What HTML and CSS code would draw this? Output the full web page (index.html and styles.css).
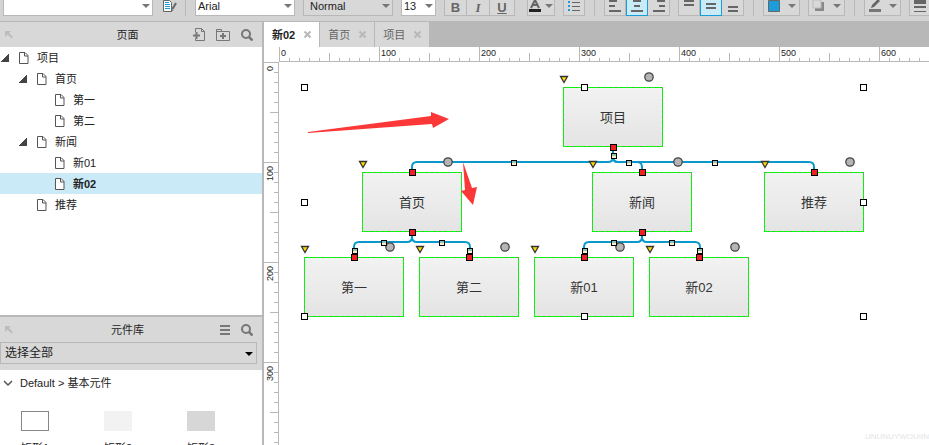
FILE: index.html
```html
<!DOCTYPE html>
<html lang="zh-CN">
<head>
  <meta charset="UTF-8" />
  <meta name="viewport" content="width=device-width, initial-scale=1.0" />
  <title>新02</title>
  <link rel="stylesheet" href="styles.css">
</head>
<body>
  <svg class="defs" aria-hidden="true">
    <symbol id="page" viewBox="0 0 10 12"><path d="M.5 .5h5.500l3 3v8h-8.500z" fill="#fff" stroke="#555"/><path d="M5.500 .5v3.500h3.500" fill="none" stroke="#555"/></symbol>
    <symbol id="search" viewBox="0 0 12 12"><circle cx="5" cy="5" r="4" fill="none" stroke="#777" stroke-width="2"/><path d="M8 8l3.500 3.500" stroke="#777" stroke-width="2.500"/></symbol>
    <symbol id="collapse" viewBox="0 0 8 8"><path d="M0 0h6l-2 2 4 4-1.500 1.500-4-4-2.500 2.500z" fill="#bcbcbc"/></symbol>
    <symbol id="down" viewBox="0 0 8 4"><path d="M0 0h8l-4 4z" fill="#777"/></symbol>
  </svg>

  <div class="toolbar">
    <span class="drop style-drop"><select aria-label="Style"><option></option></select></span>
    <button class="plain" aria-label="Edit style">
      <svg width="14" height="12" viewBox="0 0 14 12"><path d="M.5 .5h6l2 2v9h-8z" fill="#fff" stroke="#666"/><path d="M2 2.500h4M2 4.500h5M2 6.500h5M2 8.500h5" stroke="#1b9dd9"/><path d="M13 3l-3.500 6" stroke="#666" stroke-width="2"/><path d="M8 12l.5-3 2 1.200z" fill="#666"/></svg>
    </button>
    <span class="sep"></span>
    <span class="drop font-drop"><select aria-label="Font"><option>Arial</option></select></span>
    <span class="drop weight-drop"><select aria-label="Weight"><option>Normal</option></select></span>
    <span class="drop size-drop"><select aria-label="Size"><option>13</option></select></span>
    <div class="group letters">
      <button class="bold">B</button>
      <button class="italic">I</button>
      <button class="underline">U</button>
    </div>
    <button class="wide text-color" aria-label="Text color">
      <svg width="12" height="12" viewBox="0 0 12 12"><path d="M2 8l4-8 4 8M3.500 5h5" fill="none" stroke="#666" stroke-width="2"/><path d="M0 9h12v3h-12z" fill="#222"/></svg>
      <svg width="8" height="4"><use href="#down"/></svg>
    </button>
    <button class="box" aria-label="Bullets">
      <svg width="12" height="10" viewBox="0 0 12 10"><path d="M0 1h2M0 5h2M0 9h2" stroke="#1b9dd9" stroke-width="2"/><path d="M4 1.500h8M4 5.500h8M4 9.500h8" stroke="#666"/></svg>
    </button>
    <span class="sep"></span>
    <div class="group">
      <button aria-label="Align left"><svg width="12" height="12" viewBox="0 0 12 12"><path d="M0 1h8M0 6h6M0 11h12" stroke="#666" stroke-width="2"/></svg></button>
      <button class="on" aria-label="Align center"><svg width="12" height="12" viewBox="0 0 12 12"><path d="M2 1h8M3 6h6M0 11h12" stroke="#666" stroke-width="2"/></svg></button>
      <button aria-label="Align right"><svg width="12" height="12" viewBox="0 0 12 12"><path d="M4 1h8M6 6h6M0 11h12" stroke="#666" stroke-width="2"/></svg></button>
    </div>
    <div class="group">
      <button aria-label="Align top"><svg width="10" height="12" viewBox="0 0 10 12"><path d="M0 1h10M0 5h10" stroke="#666" stroke-width="2"/></svg></button>
      <button class="on" aria-label="Align middle"><svg width="10" height="12" viewBox="0 0 10 12"><path d="M0 4h10M0 8h10" stroke="#666" stroke-width="2"/></svg></button>
      <button aria-label="Align bottom"><svg width="10" height="12" viewBox="0 0 10 12"><path d="M0 7h10M0 11h10" stroke="#666" stroke-width="2"/></svg></button>
    </div>
    <span class="sep"></span>
    <button class="wide" aria-label="Fill color">
      <svg width="12" height="12" viewBox="0 0 12 12"><path d="M.5 .5h11v11h-11z" fill="#1b9dd9" stroke="#666"/></svg>
      <svg width="8" height="4"><use href="#down"/></svg>
    </button>
    <button class="wide" aria-label="Shadow">
      <svg width="12" height="12" viewBox="0 0 12 12"><path d="M2 2h9v9h-9z" fill="#888"/><path d="M0 0h8v8h-8z" fill="#d8d8d8" stroke="#bbb"/></svg>
      <svg width="8" height="4"><use href="#down"/></svg>
    </button>
    <span class="sep"></span>
    <button class="wide" aria-label="Line color">
      <svg width="12" height="12" viewBox="0 0 12 12"><path d="M0 9h12v3h-12z" fill="#777"/><path d="M2 8l1-3 6-6 2 2-6 6z" fill="#666"/></svg>
      <svg width="8" height="4"><use href="#down"/></svg>
    </button>
    <button class="wide" aria-label="Line width">
      <svg width="12" height="12" viewBox="0 0 12 12"><path d="M0 2h12" stroke="#666" stroke-width="4"/><path d="M0 7h12" stroke="#666" stroke-width="2"/><path d="M0 11.500h12" stroke="#666"/></svg>
      <svg width="8" height="4"><use href="#down"/></svg>
    </button>
  </div>

  <div class="workspace">
    <aside class="sidebar">
      <section class="pages">
        <header class="panel-head">
          <svg width="8" height="8"><use href="#collapse"/></svg>
          <h2>页面</h2>
          <div class="tools">
            <button class="plain" aria-label="Add page"><svg width="12" height="14" viewBox="0 0 12 14"><path d="M2.500 4V.5h6l3 3v9h-9v-2M8.500 .5v3h3" fill="none" stroke="#777"/><path d="M0 7.500h7M3.500 4v7" stroke="#777" stroke-width="2"/></svg></button>
            <button class="plain" aria-label="Add folder"><svg width="14" height="12" viewBox="0 0 14 12"><path d="M.5 .5h5v2h8v9h-13zM.5 2.500h5" fill="none" stroke="#777"/><path d="M4 7h6M7 4v6" stroke="#777" stroke-width="2"/></svg></button>
            <button class="plain" aria-label="Search pages"><svg width="12" height="12"><use href="#search"/></svg></button>
          </div>
        </header>
        <ul class="tree">
          <li class="open"><svg><use href="#page"/></svg><span>项目</span></li>
          <li class="open level-1"><svg><use href="#page"/></svg><span>首页</span></li>
          <li class="level-2"><svg><use href="#page"/></svg><span>第一</span></li>
          <li class="level-2"><svg><use href="#page"/></svg><span>第二</span></li>
          <li class="open level-1"><svg><use href="#page"/></svg><span>新闻</span></li>
          <li class="level-2"><svg><use href="#page"/></svg><span>新01</span></li>
          <li class="level-2 current"><svg><use href="#page"/></svg><span>新02</span></li>
          <li class="level-1"><svg><use href="#page"/></svg><span>推荐</span></li>
        </ul>
      </section>
      <section class="library">
        <header class="panel-head">
          <svg width="8" height="8"><use href="#collapse"/></svg>
          <h2>元件库</h2>
          <div class="tools">
            <button class="plain" aria-label="Library menu"><svg width="10" height="10" viewBox="0 0 10 10"><path d="M0 1h10M0 5h10M0 9h10" stroke="#777" stroke-width="2"/></svg></button>
            <button class="plain" aria-label="Search widgets"><svg width="12" height="12"><use href="#search"/></svg></button>
          </div>
        </header>
        <div class="library-pick">
          <span class="drop"><select aria-label="Library"><option>选择全部</option></select></span>
        </div>
        <div class="library-body">
          <div class="widgets">
            <h3><svg width="8" height="6" viewBox="0 0 8 6"><path d="M0 1l4 4 4-4" fill="none" stroke="#555" stroke-width="1.500"/></svg><span>Default &gt; 基本元件</span></h3>
            <div class="shapes">
              <div class="shape"><i class="outline"></i>矩形1</div>
              <div class="shape"><i class="light"></i>矩形2</div>
              <div class="shape"><i class="dark"></i>矩形3</div>
            </div>
          </div>
          <div class="scrollbar"><i class="up"></i><i class="thumb"></i></div>
        </div>
      </section>
    </aside>

    <main class="editor">
      <nav class="tabs">
        <a class="tab active" href="#"><span>新02</span><svg viewBox="0 0 7 7"><path d="M.5 .5l6 6M6.500 .5l-6 6"/></svg></a>
        <a class="tab" href="#"><span>首页</span><svg viewBox="0 0 7 7"><path d="M.5 .5l6 6M6.500 .5l-6 6"/></svg></a>
        <a class="tab" href="#"><span>项目</span><svg viewBox="0 0 7 7"><path d="M.5 .5l6 6M6.500 .5l-6 6"/></svg></a>
      </nav>
      <div class="ruler-x">
        <span>0</span><span>100</span><span>200</span><span>300</span><span>400</span><span>500</span><span>600</span>
      </div>
      <div class="ruler-y">
        <span>0</span><span>100</span><span>200</span><span>300</span>
      </div>
      <div class="canvas">
        <div class="node root">项目</div>
        <div class="node home">首页</div>
        <div class="node news">新闻</div>
        <div class="node picks">推荐</div>
        <div class="node first">第一</div>
        <div class="node second">第二</div>
        <div class="node news-1">新01</div>
        <div class="node news-2">新02</div>

        <svg class="overlay" width="650" height="383" viewBox="0 0 650 383">
          <defs>
            <linearGradient id="joint" x2="0" y2="1"><stop offset=".4" stop-color="#8cc4b4"/><stop offset=".5" stop-color="#ffeccb"/></linearGradient>
            <path id="tri" d="M-3.500-2.500h7l-3.500 6z" fill="#ffd800" stroke="#333" stroke-width="1.300"/>
            <circle id="dot" r="4.200" fill="#b4b4b4" stroke="#444" stroke-width="1.300"/>
            <rect id="port" x="-3" y="-3" width="6" height="6" fill="#f22020" stroke="#000"/>
            <rect id="mid" x="-2.500" y="-2.500" width="5" height="5" fill="url(#joint)" stroke="#000"/>
            <rect id="grip" x="-3" y="-3" width="6" height="6" fill="#fff" stroke="#000"/>
          </defs>

          <!-- connectors -->
          <g fill="none" stroke="#0a99cc" stroke-width="2">
            <path d="M334 85v10q0 5-5 5H138q-5 0-5 5v5"/>
            <path d="M334 85v10q0 5 5 5h19q5 0 5 5v5"/>
            <path d="M334 85v10q0 5 5 5h191q5 0 5 5v5"/>
            <path d="M133 170v5q0 5-5 5H80q-5 0-5 5v10"/>
            <path d="M133 170v5q0 5 5 5h48q5 0 5 5v10"/>
            <path d="M363 170v5q0 5-5 5h-48q-5 0-5 5v10"/>
            <path d="M363 170v5q0 5 5 5h48q5 0 5 5v10"/>
          </g>

          <use href="#tri" x="285" y="17"/><use href="#dot" x="370" y="15"/>
          <use href="#tri" x="84" y="102"/><use href="#dot" x="169" y="100"/>
          <use href="#tri" x="314" y="102"/><use href="#dot" x="399" y="100"/>
          <use href="#tri" x="486" y="102"/><use href="#dot" x="571" y="100"/>
          <use href="#tri" x="26" y="187"/><use href="#dot" x="111" y="185"/>
          <use href="#tri" x="141" y="187"/><use href="#dot" x="226" y="185"/>
          <use href="#tri" x="256" y="187"/><use href="#dot" x="341" y="185"/>
          <use href="#tri" x="371" y="187"/><use href="#dot" x="456" y="185"/>

          <use href="#mid" x="335" y="94"/><use href="#mid" x="235" y="101"/><use href="#mid" x="350" y="101"/><use href="#mid" x="436" y="101"/>
          <use href="#mid" x="105" y="181"/><use href="#mid" x="163" y="181"/><use href="#mid" x="76" y="189"/><use href="#mid" x="191" y="189"/>
          <use href="#mid" x="335" y="181"/><use href="#mid" x="393" y="181"/><use href="#mid" x="306" y="189"/><use href="#mid" x="421" y="189"/>

          <g transform="translate(.5 .5)">
            <use href="#port" x="334" y="85"/><use href="#port" x="133" y="110"/><use href="#port" x="363" y="110"/><use href="#port" x="535" y="110"/>
            <use href="#port" x="133" y="170"/><use href="#port" x="363" y="170"/>
            <use href="#port" x="75" y="195"/><use href="#port" x="190" y="195"/><use href="#port" x="305" y="195"/><use href="#port" x="420" y="195"/>
            <use href="#grip" x="25" y="25"/><use href="#grip" x="305" y="25"/><use href="#grip" x="584" y="25"/>
            <use href="#grip" x="25" y="140"/><use href="#grip" x="584" y="140"/>
            <use href="#grip" x="25" y="254"/><use href="#grip" x="305" y="254"/><use href="#grip" x="584" y="254"/>
          </g>

          <g fill="#fc3737">
            <path d="M29 70L152 54v-4l18 7-16 9-1-4L29 71z"/>
            <path d="M184 100l9 26 5-1-4 18-12-14 4-1z"/>
          </g>
        </svg>
        <span class="watermark">UNUNUYWOUIIN</span>
      </div>
    </main>
  </div>
</body>
</html>
```

FILE: styles.css
```css
* {
  box-sizing: border-box;
}

body {
  margin: 0;
  height: 100vh;
  display: flex;
  flex-direction: column;
  overflow: hidden;
  font-family: "Liberation Sans", "Noto Sans CJK SC", sans-serif;
  font-size: 11px;
  color: #222;
  background: #fff;
}

button, select {
  font: inherit;
  color: inherit;
}

svg {
  display: block;
  flex: none;
  overflow: visible;
}

.defs {
  position: absolute;
  width: 0;
  height: 0;
}

/* toolbar */
.toolbar {
  flex: none;
  display: flex;
  align-items: flex-end;
  gap: 8px;
  height: 21px;
  padding: 0 0 5px 3px;
  overflow: hidden;
  background: #d3d3d3;
}

.toolbar > * {
  flex: none;
  height: 20px;
}

.plain {
  display: flex;
  align-items: center;
  padding: 0;
  border: none;
  background: none;
}

.toolbar .plain {
  padding-left: 2px;
}

.sep {
  width: 1px;
  margin: 0 1px 0 0;
  background: #b8b8b8;
}

.group + .sep, .wide + .sep, .box + .sep {
  margin-left: 1px;
}

.drop {
  position: relative;
  display: block;
}

.drop::after {
  content: "";
  position: absolute;
  right: 3px;
  top: 8px;
  border: 4px solid transparent;
  border-top-color: #777;
  border-bottom: none;
  pointer-events: none;
}

.drop select {
  appearance: none;
  display: block;
  width: 100%;
  height: 100%;
  padding: 0 2px;
  border: 1px solid #b8b8b8;
  border-radius: 0;
  background: #fff;
}

.style-drop {
  width: 150px;
}

.font-drop {
  width: 100px;
}

.weight-drop {
  width: 90px;
}

.weight-drop select {
  padding-left: 6px;
  background: #d8d8d8;
}

.size-drop {
  width: 35px;
}

.group {
  display: flex;
}

.group button {
  display: flex;
  justify-content: center;
  align-items: center;
  width: 22px;
  padding: 0;
  border: 1px solid #b8b8b8;
  border-left: none;
  background: #d8d8d8;
  color: #666;
}

.group button:first-child {
  border-left: 1px solid #b8b8b8;
}

.group .on {
  border: 1px solid #1b9dd9;
  background: #c9ebf8;
}

.letters button {
  width: 23px;
  padding-top: 3px;
  font-size: 13px;
  line-height: 12px;
}

.group .bold {
  font-weight: bold;
}

.group .italic {
  font-family: "Liberation Serif", serif;
  font-style: italic;
  font-weight: bold;
}

.group .underline {
  width: 25px;
  font-weight: bold;
  text-decoration: underline;
}

.wide, .box {
  display: flex;
  align-items: center;
  justify-content: center;
  gap: 8px;
  width: 37px;
  padding: 0;
  border: 1px solid #b8b8b8;
  background: #d8d8d8;
}

.text-color {
  gap: 4px;
  width: 28px;
  margin-left: 4px;
}

.box {
  width: 22px;
}

/* panels */
.workspace {
  flex: 1;
  display: flex;
  min-height: 0;
}

.sidebar {
  flex: none;
  display: flex;
  flex-direction: column;
  width: 264px;
  border: solid #b8b8b8;
  border-width: 1px 2px 0 0;
}

.panel-head {
  display: grid;
  grid-template-columns: 1fr auto 1fr;
  align-items: center;
  height: 25px;
  padding: 0 9px 0 5px;
  background: #d8d8d8;
}

.panel-head h2 {
  margin: 0;
  padding: 0 3px 2px 0;
  font-size: 11px;
  font-weight: normal;
}

.tools {
  display: flex;
  justify-content: flex-end;
  align-items: center;
  gap: 11px;
}

.pages {
  flex: 1;
  min-height: 0;
}

.tree {
  margin: 0;
  padding: 0;
  list-style: none;
}

.tree li {
  display: flex;
  align-items: center;
  height: 21px;
  padding-left: 19px;
}

.tree span, .tab span, .widgets h3 span {
  padding-bottom: 2px;
}

.tree svg {
  width: 10px;
  height: 12px;
  margin-right: 8px;
}

.tree .level-1 {
  padding-left: 37px;
}

.tree .level-2 {
  padding-left: 55px;
}

.tree .open::before {
  content: "";
  width: 8px;
  height: 8px;
  margin: 0 10px 0 -18px;
  background: linear-gradient(135deg, transparent 50%, #444 50%);
}

.tree .current {
  font-weight: bold;
  background: #c9eaf6;
}

.library {
  flex: none;
  height: 130px;
  overflow: hidden;
  border-top: 2px solid #b8b8b8;
}

.library-pick {
  padding: 0 5px 6px 0;
  background: #d8d8d8;
}

.library-pick .drop {
  height: 22px;
}

.library-pick select {
  padding-left: 4px;
  background: #d8d8d8;
  font-size: 12px;
}

.library-pick .drop::after {
  right: 4px;
  top: 10px;
  border-top-color: #000;
}

.library-body {
  display: flex;
}

.widgets {
  flex: 1;
}

.widgets h3 {
  display: flex;
  align-items: center;
  gap: 8px;
  height: 26px;
  margin: 0;
  padding-left: 4px;
  font-size: 11px;
  font-weight: normal;
}

.shapes {
  display: grid;
  grid-template-columns: repeat(3, 83px);
  padding: 15px 0 0 21px;
}

.shape {
  width: 28px;
  text-align: center;
  white-space: nowrap;
}

.shape i {
  display: block;
  height: 20px;
  margin-bottom: 8px;
}

.outline {
  border: 1px solid #888;
}

.light {
  background: #f2f2f2;
}

.dark {
  background: #d7d7d7;
}

.scrollbar {
  display: flex;
  flex-direction: column;
  align-items: center;
  gap: 7px;
  width: 17px;
  padding-top: 6px;
  background: #ececec;
}

.up {
  border: 3px solid transparent;
  border-top: none;
  border-bottom: 4px solid #888;
}

.thumb {
  width: 15px;
  height: 7px;
  border: 1px solid #999;
  border-radius: 2px;
  background: linear-gradient(90deg, #fff, #ccc);
}

/* editor */
.editor {
  flex: 1;
  display: grid;
  grid-template-columns: 15px 1fr;
  grid-template-rows: 26px 15px 1fr;
  min-width: 0;
}

.tabs {
  grid-column: 1 / 3;
  display: flex;
  gap: 1px;
  padding-top: 1px;
  background: #b8b8b8;
}

.tab {
  display: flex;
  align-items: center;
  gap: 9px;
  padding: 0 8px;
  background: #d8d8d8;
  color: #666;
  text-decoration: none;
}

.tab svg {
  width: 7px;
  height: 7px;
  stroke: #b8b8b8;
  stroke-width: 2;
}

.tab.active {
  background: #fff;
  color: #222;
  font-weight: bold;
}

.ruler-x {
  grid-column: 2;
  display: flex;
  overflow: hidden;
  border-bottom: 1px solid #b8b8b8;
  background:
    repeating-linear-gradient(90deg, #b8b8b8 0 1px, transparent 1px 100px),
    repeating-linear-gradient(90deg, #b8b8b8 0 1px, transparent 1px 50px) 0 6px no-repeat,
    repeating-linear-gradient(90deg, #b8b8b8 0 1px, transparent 1px 10px) 0 11px no-repeat;
}

.ruler-x span, .ruler-y span {
  flex: none;
  font-size: 9px;
  line-height: 12px;
}

.ruler-x span {
  width: 100px;
  padding-left: 2px;
}

.ruler-y {
  display: flex;
  flex-direction: column;
  overflow: hidden;
  border-right: 1px solid #b8b8b8;
  background:
    repeating-linear-gradient(#b8b8b8 0 1px, transparent 1px 100px),
    repeating-linear-gradient(#b8b8b8 0 1px, transparent 1px 50px) 6px 0 no-repeat,
    repeating-linear-gradient(#b8b8b8 0 1px, transparent 1px 10px) 10px 0 no-repeat;
}

.ruler-y span {
  width: 12px;
  height: 100px;
  padding-bottom: 4px;
  writing-mode: vertical-rl;
  transform: rotate(180deg);
  text-align: right;
}

/* site map drawn on the canvas */
.canvas {
  position: relative;
  overflow: hidden;
}

.node {
  position: absolute;
  display: flex;
  justify-content: center;
  align-items: center;
  width: 100px;
  height: 60px;
  padding-bottom: 2px;
  border: 1px solid transparent;
  background:
    linear-gradient(#f2f2f2, #e4e4e4) padding-box,
    repeating-linear-gradient(45deg, #0f0 0 3px, #5a5 3px 4px) border-box;
  color: #333;
  font-size: 13px;
}

.root { left: 284px; top: 25px; }
.home { left: 83px; top: 110px; }
.news { left: 313px; top: 110px; }
.picks { left: 485px; top: 110px; }
.first { left: 25px; top: 195px; }
.second { left: 140px; top: 195px; }
.news-1 { left: 255px; top: 195px; }
.news-2 { left: 370px; top: 195px; }

.overlay {
  position: absolute;
  left: 0;
  top: 0;
}

.watermark {
  position: absolute;
  right: 0;
  bottom: 4px;
  font-size: 8px;
  color: #e4e4e4;
}
```
